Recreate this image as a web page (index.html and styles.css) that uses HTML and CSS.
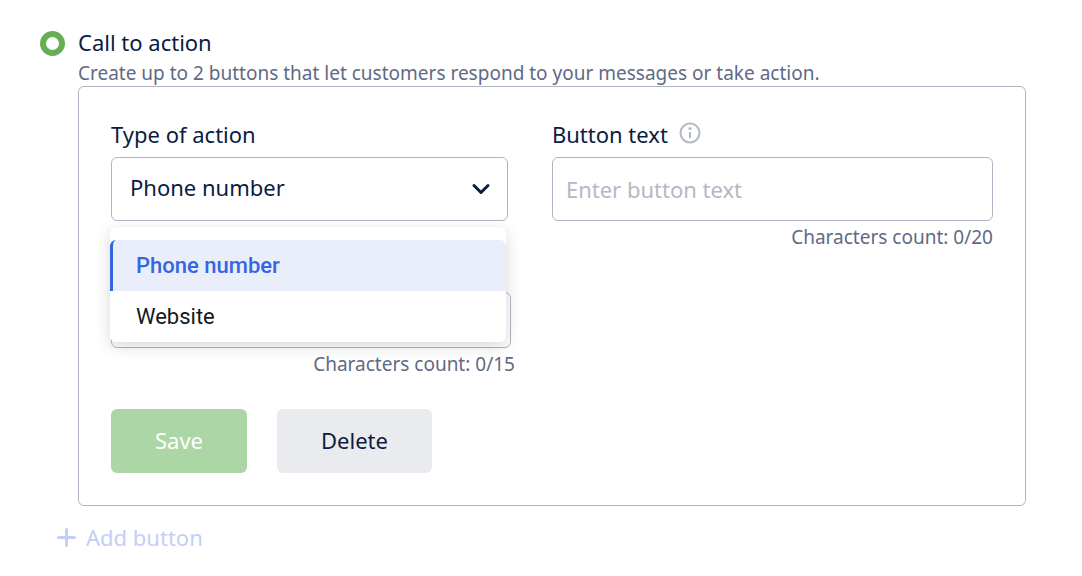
FILE: index.html
```html
<!DOCTYPE html>
<html lang="en">
<head>
<meta charset="utf-8">
<meta name="viewport" content="width=device-width, initial-scale=1">
<title>Call to action</title>
<link rel="stylesheet" href="styles.css">
</head>
<body>
<form class="page">
  <div class="choice">
    <input class="radio" type="radio" id="cta" name="kind" checked>
    <div class="choice-body">
      <label class="title" for="cta">Call to action</label>
      <p class="hint">Create up to 2 buttons that let customers respond to your messages or take action.</p>
      <section class="card">
        <div class="fields">
          <div class="field">
            <label class="label" for="type">Type of action</label>
            <div class="select-wrap">
              <select class="control select" id="type">
                <option>Phone number</option>
                <option>Website</option>
              </select>
              <svg class="chevron" viewBox="0 0 20 14" aria-hidden="true"><path d="M3 3.5l7 7 7-7"/></svg>
              <ul class="menu" role="listbox" aria-label="Type of action">
                <li class="item item-active" role="option" aria-selected="true">Phone number</li>
                <li class="item" role="option" aria-selected="false">Website</li>
              </ul>
            </div>
          </div>
          <div class="field">
            <div class="label-row">
              <label class="label" for="text">Button text</label>
              <svg class="info" viewBox="0 0 22 22" aria-hidden="true"><circle class="info-ring" cx="11" cy="11" r="9.5"/><circle class="info-dot" cx="11" cy="6.6" r="1.5"/><path class="info-stem" d="M11 10v6"/></svg>
            </div>
            <input class="control text-input" id="text" type="text" placeholder="Enter button text">
            <p class="count">Characters count: 0/20</p>
          </div>
          <div class="field phone-field">
            <input class="control phone-input" type="tel" aria-label="Phone number">
            <p class="count">Characters count: 0/15</p>
          </div>
        </div>
        <div class="actions">
          <button class="btn btn-save" type="button" disabled>Save</button>
          <button class="btn btn-delete" type="button">Delete</button>
        </div>
      </section>
    </div>
  </div>
  <button class="add" type="button" disabled>
    <svg class="plus" viewBox="0 0 20 20" aria-hidden="true"><path d="M10.5 2.5v16M2.5 10.5h16"/></svg>
    Add button
  </button>
</form>
</body>
</html>
```
FILE: styles.css
```css
* {
  box-sizing: border-box;
}

body {
  margin: 0;
  background: #fff;
  color: #0b1c3f;
  font-family: "Noto Sans", sans-serif;
  font-size: 22px;
  line-height: 32px;
}

p,
ul {
  margin: 0;
  padding: 0;
}

button,
input,
select {
  font: inherit;
  color: inherit;
}

.page {
  padding: 26px 56px 16px 40px;
}

.choice {
  display: flex;
  gap: 13px;
}

.choice-body {
  flex: 1;
  min-width: 0;
}

.radio {
  appearance: none;
  flex: none;
  width: 25px;
  height: 25px;
  margin: 5px 0 0;
  border: 6px solid #67ad56;
  border-radius: 50%;
  background: #fff;
}

.title,
.label {
  display: block;
}

.label {
  line-height: 30px;
}

.hint,
.count {
  color: #5f6a84;
  font-size: 19px;
  line-height: 26px;
}

.hint {
  margin-top: 2px;
}

.card {
  padding: 32px;
  border: 1px solid #b0b5c3;
  border-radius: 6px;
}

.fields {
  display: grid;
  grid-template-columns: 9fr 10fr;
  column-gap: 44px;
  row-gap: 42px;
}

.label-row {
  display: flex;
  gap: 11px;
}

.info {
  width: 22px;
  height: 22px;
  margin-top: 3px;
}

.info-ring,
.info-stem {
  fill: none;
  stroke: #b2b9c5;
  stroke-width: 2;
}

.info-dot {
  fill: #b2b9c5;
}

.control {
  display: block;
  width: 100%;
  height: 64px;
  border: 1px solid #b0b5c3;
  border-radius: 6px;
  background: #fff;
}

.select-wrap {
  position: relative;
  margin-top: 8px;
}

.select {
  appearance: none;
  padding: 0 48px 4px 18px;
}

.chevron {
  position: absolute;
  top: 25px;
  right: 17px;
  width: 20px;
  height: 14px;
  fill: none;
  stroke: #0b1c3f;
  stroke-width: 3;
  stroke-linecap: round;
  stroke-linejoin: round;
  pointer-events: none;
}

.menu {
  position: absolute;
  z-index: 1;
  top: 70px;
  left: -1px;
  right: 2px;
  padding-top: 13px;
  border-radius: 6px;
  background: #fff;
  box-shadow: 0 4px 16px rgba(0, 0, 0, 0.16);
  color: #15171f;
  font-family: Roboto, sans-serif;
  list-style: none;
}

.item {
  padding: 0 26px;
  line-height: 51px;
}

.item-active {
  padding-left: 23px;
  border-left: 3px solid #3665e2;
  border-radius: 6px 6px 0 0;
  background: #eaeefb;
  color: #3665e2;
  font-weight: 500;
}

.text-input {
  margin-top: 8px;
  padding: 0 13px;
}

.text-input::placeholder {
  color: #b2b9c5;
  opacity: 1;
}

.count {
  margin-top: 3px;
  text-align: right;
}

.phone-field {
  margin-right: -7px;
}

.phone-input {
  width: calc(100% - 4px);
  height: 56px;
  padding: 0 13px;
}

.actions {
  display: flex;
  gap: 30px;
  margin-top: 32px;
}

.btn {
  height: 64px;
  padding: 0 44px 2px;
  border: 0;
  border-radius: 6px;
}

.btn-save {
  background: #acd6a6;
  color: #fff;
}

.btn-delete {
  background: #eaebef;
}

.add {
  display: flex;
  align-items: center;
  gap: 10px;
  margin: 15px 0 0 16px;
  padding: 0;
  border: 0;
  background: none;
  color: #c2cff6;
}

.plus {
  width: 20px;
  height: 20px;
  fill: none;
  stroke: currentColor;
  stroke-width: 3;
  stroke-linecap: round;
}
```
